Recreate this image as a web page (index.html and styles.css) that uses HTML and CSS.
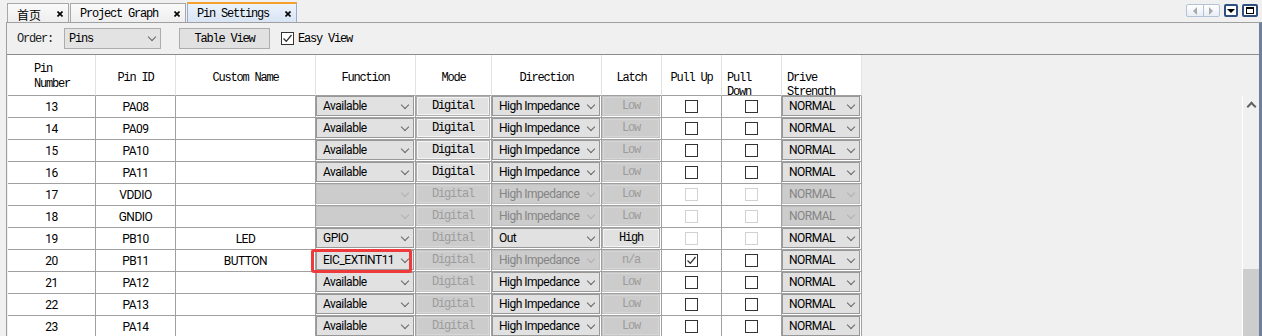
FILE: index.html
```html
<!DOCTYPE html>
<html lang="zh-CN">
<head>
    <meta charset="UTF-8">
    <title>Pin Settings</title>
    <link rel="stylesheet" href="styles.css">
</head>
<body>
    <div class="tabbar">
        <div class="tab"><span class="cn">首页</span><svg class="x" width="6" height="6" viewBox="0 0 6 6"><path d="M0.5 0.5L5.5 5.5M5.5 0.5L0.5 5.5"/></svg></div>
        <div class="tab"><span>Project Graph</span><svg class="x" width="6" height="6" viewBox="0 0 6 6"><path d="M0.5 0.5L5.5 5.5M5.5 0.5L0.5 5.5"/></svg></div>
        <div class="tab active"><span>Pin Settings</span><svg class="x" width="6" height="6" viewBox="0 0 6 6"><path d="M0.5 0.5L5.5 5.5M5.5 0.5L0.5 5.5"/></svg></div>
        <div class="wincmd">
            <div class="navpair"><span class="tri-l"></span><span class="tri-r"></span></div>
            <div class="wbtn"><span class="tri-d"></span></div>
            <div class="wbtn wide"><span class="sq"></span></div>
        </div>
    </div>

    <div class="panel">
        <div class="toolbar">
            <span class="lbl">Order:</span>
            <div class="pick">Pins</div>
            <div class="tbtn">Table View</div>
            <span class="chk tchk on"><svg width="11" height="11" viewBox="0 0 11 11"><path d="M1.5 5.5L4.3 8.3L9.5 2"/></svg></span>
            <span class="easy">Easy View</span>
        </div>

        <div class="grid">
            <div class="head">
                <div class="cols">
                    <div class="h pn">Pin<br>Number</div>
                    <div class="h">Pin ID</div>
                    <div class="h">Custom Name</div>
                    <div class="h">Function</div>
                    <div class="h">Mode</div>
                    <div class="h">Direction</div>
                    <div class="h">Latch</div>
                    <div class="h">Pull Up</div>
                    <div class="h wrap">Pull<br>Down</div>
                    <div class="h wrap">Drive<br>Strength</div>
                </div>
                <div class="filler"></div>
            </div>

            <div class="body">
                <div class="rows">
                    <div class="cols">
                        <div class="c">13</div><div class="c">PA08</div><div class="c"></div>
                        <div class="c ctl"><div class="sel">Available</div></div>
                        <div class="c ctl"><div class="btn">Digital</div></div>
                        <div class="c ctl"><div class="sel">High Impedance</div></div>
                        <div class="c ctl"><div class="btn off">Low</div></div>
                        <div class="c"><span class="chk"></span></div>
                        <div class="c"><span class="chk"></span></div>
                        <div class="c ctl"><div class="sel">NORMAL</div></div>
                    </div>
                    <div class="cols">
                        <div class="c">14</div><div class="c">PA09</div><div class="c"></div>
                        <div class="c ctl"><div class="sel">Available</div></div>
                        <div class="c ctl"><div class="btn">Digital</div></div>
                        <div class="c ctl"><div class="sel">High Impedance</div></div>
                        <div class="c ctl"><div class="btn off">Low</div></div>
                        <div class="c"><span class="chk"></span></div>
                        <div class="c"><span class="chk"></span></div>
                        <div class="c ctl"><div class="sel">NORMAL</div></div>
                    </div>
                    <div class="cols">
                        <div class="c">15</div><div class="c">PA10</div><div class="c"></div>
                        <div class="c ctl"><div class="sel">Available</div></div>
                        <div class="c ctl"><div class="btn">Digital</div></div>
                        <div class="c ctl"><div class="sel">High Impedance</div></div>
                        <div class="c ctl"><div class="btn off">Low</div></div>
                        <div class="c"><span class="chk"></span></div>
                        <div class="c"><span class="chk"></span></div>
                        <div class="c ctl"><div class="sel">NORMAL</div></div>
                    </div>
                    <div class="cols">
                        <div class="c">16</div><div class="c">PA11</div><div class="c"></div>
                        <div class="c ctl"><div class="sel">Available</div></div>
                        <div class="c ctl"><div class="btn">Digital</div></div>
                        <div class="c ctl"><div class="sel">High Impedance</div></div>
                        <div class="c ctl"><div class="btn off">Low</div></div>
                        <div class="c"><span class="chk"></span></div>
                        <div class="c"><span class="chk"></span></div>
                        <div class="c ctl"><div class="sel">NORMAL</div></div>
                    </div>
                    <div class="cols">
                        <div class="c">17</div><div class="c">VDDIO</div><div class="c"></div>
                        <div class="c ctl"><div class="sel off"></div></div>
                        <div class="c ctl"><div class="btn off">Digital</div></div>
                        <div class="c ctl"><div class="sel off">High Impedance</div></div>
                        <div class="c ctl"><div class="btn off">Low</div></div>
                        <div class="c"><span class="chk off"></span></div>
                        <div class="c"><span class="chk off"></span></div>
                        <div class="c ctl"><div class="sel off">NORMAL</div></div>
                    </div>
                    <div class="cols">
                        <div class="c">18</div><div class="c">GNDIO</div><div class="c"></div>
                        <div class="c ctl"><div class="sel off"></div></div>
                        <div class="c ctl"><div class="btn off">Digital</div></div>
                        <div class="c ctl"><div class="sel off">High Impedance</div></div>
                        <div class="c ctl"><div class="btn off">Low</div></div>
                        <div class="c"><span class="chk off"></span></div>
                        <div class="c"><span class="chk off"></span></div>
                        <div class="c ctl"><div class="sel off">NORMAL</div></div>
                    </div>
                    <div class="cols">
                        <div class="c">19</div><div class="c">PB10</div><div class="c">LED</div>
                        <div class="c ctl"><div class="sel">GPIO</div></div>
                        <div class="c ctl"><div class="btn off">Digital</div></div>
                        <div class="c ctl"><div class="sel">Out</div></div>
                        <div class="c ctl"><div class="btn">High</div></div>
                        <div class="c"><span class="chk off"></span></div>
                        <div class="c"><span class="chk off"></span></div>
                        <div class="c ctl"><div class="sel">NORMAL</div></div>
                    </div>
                    <div class="cols">
                        <div class="c">20</div><div class="c">PB11</div><div class="c">BUTTON</div>
                        <div class="c ctl marked"><div class="sel">EIC_EXTINT11</div><span class="mark"></span></div>
                        <div class="c ctl"><div class="btn off">Digital</div></div>
                        <div class="c ctl"><div class="sel off">High Impedance</div></div>
                        <div class="c ctl"><div class="btn off">n/a</div></div>
                        <div class="c"><span class="chk on"><svg width="11" height="11" viewBox="0 0 11 11"><path d="M1.5 5.5L4.3 8.3L9.5 2"/></svg></span></div>
                        <div class="c"><span class="chk"></span></div>
                        <div class="c ctl"><div class="sel">NORMAL</div></div>
                    </div>
                    <div class="cols">
                        <div class="c">21</div><div class="c">PA12</div><div class="c"></div>
                        <div class="c ctl"><div class="sel">Available</div></div>
                        <div class="c ctl"><div class="btn off">Digital</div></div>
                        <div class="c ctl"><div class="sel">High Impedance</div></div>
                        <div class="c ctl"><div class="btn off">Low</div></div>
                        <div class="c"><span class="chk"></span></div>
                        <div class="c"><span class="chk"></span></div>
                        <div class="c ctl"><div class="sel">NORMAL</div></div>
                    </div>
                    <div class="cols">
                        <div class="c">22</div><div class="c">PA13</div><div class="c"></div>
                        <div class="c ctl"><div class="sel">Available</div></div>
                        <div class="c ctl"><div class="btn off">Digital</div></div>
                        <div class="c ctl"><div class="sel">High Impedance</div></div>
                        <div class="c ctl"><div class="btn off">Low</div></div>
                        <div class="c"><span class="chk"></span></div>
                        <div class="c"><span class="chk"></span></div>
                        <div class="c ctl"><div class="sel">NORMAL</div></div>
                    </div>
                    <div class="cols">
                        <div class="c">23</div><div class="c">PA14</div><div class="c"></div>
                        <div class="c ctl"><div class="sel">Available</div></div>
                        <div class="c ctl"><div class="btn off">Digital</div></div>
                        <div class="c ctl"><div class="sel">High Impedance</div></div>
                        <div class="c ctl"><div class="btn off">Low</div></div>
                        <div class="c"><span class="chk"></span></div>
                        <div class="c"><span class="chk"></span></div>
                        <div class="c ctl"><div class="sel">NORMAL</div></div>
                    </div>
                </div>
                <div class="filler"></div>
                <div class="vscroll">
                    <div class="up"></div>
                    <div class="thumb"></div>
                </div>
            </div>
        </div>
    </div>
</body>
</html>
```

FILE: styles.css
```css
* {
    box-sizing: border-box;
}
body {
    margin: 0;
    height: 336px;
    overflow: hidden;
    background-color: #f0f0f0;
    font-family: "Liberation Mono", monospace;
    font-size: 12px;
    letter-spacing: -1.2px;
    color: #000;
}

/* tab strip */
.tabbar {
    height: 22px;
    display: flex;
    align-items: flex-end;
    padding: 0 4px 0 7px;
}
.tab {
    height: 19px;
    display: flex;
    align-items: center;
    gap: 16px;
    padding: 2px 5px 0 9px;
    margin-right: 1px;
    border: 1px solid #a8a8a8;
    border-bottom: none;
    background: linear-gradient(#fafafa, #eeeeee);
    white-space: nowrap;
}
.tab.active {
    height: 20px;
    border-color: #9aaccb;
    border-top: 2px solid #f4a12e;
    background: linear-gradient(#ebf2fb, #d9e5f5);
}
.tab .cn {
    font-family: "Noto Sans CJK SC", sans-serif;
    font-size: 12px;
    letter-spacing: 0;
}
.x path {
    stroke: #000;
    stroke-width: 1.6;
}
.wincmd {
    margin-left: auto;
    align-self: flex-start;
    margin-top: 4px;
    display: flex;
    gap: 4px;
}
.navpair {
    width: 34px;
    height: 13px;
    display: flex;
    border: 1px solid #b4c2d8;
    border-radius: 2px;
    background: linear-gradient(#ffffff, #e9eef6);
}
.navpair span {
    flex: 1;
    display: flex;
    align-items: center;
    justify-content: center;
}
.tri-l {
    border-right: 1px solid #b4c2d8;
}
.tri-l::before {
    content: "";
    border-top: 4px solid transparent;
    border-bottom: 4px solid transparent;
    border-right: 4px solid #a9a9a9;
}
.tri-r::before {
    content: "";
    border-top: 4px solid transparent;
    border-bottom: 4px solid transparent;
    border-left: 4px solid #a9a9a9;
}
.wbtn {
    width: 14px;
    height: 13px;
    display: flex;
    align-items: center;
    justify-content: center;
    border: 2px solid #2f4f80;
    border-radius: 2px;
    background: #fff;
}
.wbtn.wide {
    width: 16px;
}
.tri-d {
    border-left: 4px solid transparent;
    border-right: 4px solid transparent;
    border-top: 4px solid #000;
}
.sq {
    width: 8px;
    height: 7px;
    border: 1px solid #000;
    border-top-width: 2px;
}

/* panel */
.panel {
    height: 314px;
    margin-left: 6px;
    display: flex;
    flex-direction: column;
    border-left: 1px solid #a0a0a0;
    border-top: 1px solid #a0a0a0;
    border-right: 3px solid #6e809c;
}
.toolbar {
    height: 32px;
    flex: none;
    display: flex;
    align-items: center;
    padding-left: 10px;
    border-bottom: 1px solid #8c8c8c;
}
.lbl {
    color: #222;
}
.pick {
    width: 97px;
    height: 21px;
    margin-left: 11px;
    display: flex;
    align-items: center;
    justify-content: space-between;
    padding: 0 5px 0 4px;
    border: 1px solid #adadad;
    background-color: #e3e3e3;
}
.pick::after,
.sel::after {
    content: "";
    width: 5px;
    height: 5px;
    margin: -3px 0 0 auto;
    border-right: 1px solid #666;
    border-bottom: 1px solid #666;
    transform: rotate(45deg);
}
.tbtn {
    width: 91px;
    height: 21px;
    margin-left: 18px;
    display: flex;
    align-items: center;
    justify-content: center;
    border: 1px solid #adadad;
    background-color: #e1e1e1;
}
.tchk {
    margin-left: 11px;
}
.easy {
    margin-left: 4px;
}

/* pin table */
.grid {
    flex: 1;
    display: flex;
    flex-direction: column;
    padding-left: 1px;
    overflow: hidden;
}
.head {
    height: 41px;
    flex: none;
    display: flex;
}
.cols {
    width: 854px;
    flex: none;
    display: grid;
    grid-template-columns: 88px 80px 140px 100px 76px 110px 60px 60px 60px 80px;
}
.filler {
    flex: 1;
}
.h {
    height: 41px;
    overflow: hidden;
    display: flex;
    justify-content: center;
    padding-top: 16px;
    line-height: 14px;
    background-color: #fff;
    border-right: 1px solid #e2e2e2;
    border-bottom: 1px solid #a0a0a0;
}
.h.pn {
    justify-content: flex-start;
    padding: 7px 0 0 26px;
    line-height: 15px;
}
.h.wrap {
    justify-content: flex-start;
    padding-left: 5px;
}
.body {
    flex: 1;
    display: flex;
    overflow: hidden;
}
.rows {
    width: 854px;
    flex: none;
}
.c {
    height: 22px;
    display: flex;
    align-items: center;
    justify-content: center;
    background-color: #fff;
    border-right: 1px solid #a0a0a0;
    border-bottom: 1px solid #a0a0a0;
    font-family: Roboto, "Liberation Sans", sans-serif;
    font-size: 12px;
    letter-spacing: -0.5px;
}
.c.ctl {
    align-items: stretch;
    padding: 0 1px 1px 0;
}
.ctl > div {
    flex: 1;
}
.sel {
    display: flex;
    align-items: center;
    padding: 0 5px 0 6px;
    border: 1px solid #989898;
    background-color: #e1e1e1;
    white-space: nowrap;
}
.sel.off {
    border-color: #bfbfbf;
    background-color: #cccccc;
    color: #858585;
}
.sel.off::after {
    border-color: #b0b0b0;
}
.btn {
    display: flex;
    align-items: center;
    justify-content: center;
    font-family: "Liberation Mono", monospace;
    font-size: 12px;
    letter-spacing: -1.2px;
    border: 1px solid #adadad;
    box-shadow: inset 0 0 0 1px #f4f4f4;
    background-color: #e1e1e1;
}
.btn.off {
    border-color: #c4c4c4;
    box-shadow: inset 0 0 0 1px #d6d6d6;
    background-color: #cccccc;
    color: #9c9c9c;
}
.chk {
    width: 13px;
    height: 13px;
    display: inline-block;
    border: 1px solid #333;
    background-color: #fff;
}
.chk.off {
    border-color: #d2d2d2;
}
.chk svg {
    display: block;
}
.chk path {
    fill: none;
    stroke: #333;
    stroke-width: 1.3;
}
.marked {
    position: relative;
}
.mark {
    position: absolute;
    left: -5px;
    top: -1px;
    width: 101px;
    height: 24px;
    border: 3px solid #ee3a3a;
    border-radius: 3px;
}

/* scroll bar */
.vscroll {
    width: 17px;
    flex: none;
    border-left: 1px solid #fff;
}
.up {
    height: 17px;
    display: flex;
    align-items: center;
    justify-content: center;
}
.up::before {
    content: "";
    width: 5px;
    height: 5px;
    margin-top: 3px;
    border-left: 2px solid #606060;
    border-top: 2px solid #606060;
    transform: rotate(45deg);
}
.thumb {
    height: 90px;
    margin-top: 156px;
    background-color: #cdcdcd;
}
```
